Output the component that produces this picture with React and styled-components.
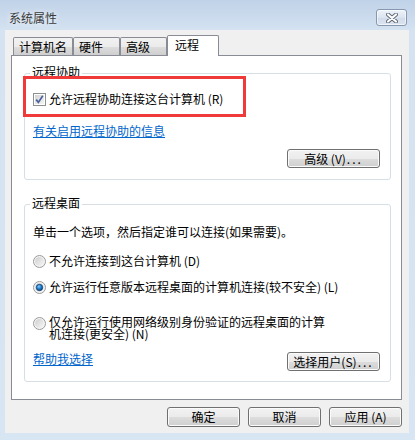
import React from 'react'
import styled, { createGlobalStyle } from 'styled-components'

const GlobalStyle = createGlobalStyle`
  body {
    margin: 0;
    font-family: "Noto Sans CJK SC", "Liberation Sans", sans-serif;
    font-size: 12px;
    color: #000;
  }
`

const Window = styled.div`
  width: 415px;
  height: 440px;
  background: linear-gradient(#c0d2e8 0px, #d4e2f1 30px, #d8e5f3 100%);
  display: flex;
  flex-direction: column;
  box-sizing: border-box;
`

const TitleBar = styled.div`
  height: 30px;
  display: flex;
  justify-content: space-between;
  align-items: flex-start;
  padding: 0 8px 0 9px;
`

const Title = styled.div`
  margin-top: 11px;
  line-height: 14px;
  font-size: 12px;
  color: #3a3a3a;
  text-shadow: 0 0 6px rgba(255, 255, 255, 0.9);
`

const CloseButton = styled.div`
  margin-top: 9px;
  width: 31px;
  height: 17px;
  box-sizing: border-box;
  border: 1px solid #8797ae;
  border-radius: 3px;
  background: linear-gradient(#eef3fa, #dbe4f0 50%, #d0dbea 51%, #dbe5f1);
  box-shadow: inset 0 0 0 1px rgba(255, 255, 255, 0.6);
  display: flex;
  align-items: center;
  justify-content: center;
`

const Client = styled.div`
  margin-left: 5px;
  width: 404px;
  height: 403px;
  background: #f0f0f0;
  box-sizing: border-box;
  padding: 5px 0 0 6px;
  display: flex;
  flex-direction: column;
`

const TabStrip = styled.div`
  display: flex;
  align-items: flex-end;
  height: 21px;
  padding-left: 2px;
  margin-bottom: -1px;
  position: relative;
  z-index: 1;
`

const Tab = styled.div`
  width: ${p => p.$w}px;
  height: ${p => (p.$active ? 21 : 18)}px;
  margin-bottom: ${p => (p.$active ? 0 : 1)}px;
  box-sizing: border-box;
  border: 1px solid #898c95;
  border-bottom: none;
  border-radius: 2px 2px 0 0;
  background: ${p => (p.$active
    ? '#fff'
    : 'linear-gradient(#f2f2f2, #ebebeb 50%, #dddddd 51%, #cfcfcf)')};
  padding: ${p => (p.$active ? '0 0 2px 7px' : '0 0 0 5px')};
  display: flex;
  align-items: center;
  line-height: 14px;
  font-size: 12px;
`

const Panel = styled.div`
  width: 391px;
  height: 345px;
  box-sizing: border-box;
  border: 1px solid #898c95;
  background: #fff;
  padding: 17px 10px 0 12px;
  display: flex;
  flex-direction: column;
`

const GroupBox = styled.div`
  border: 1px solid #d5dfe5;
  border-radius: 3px;
  padding: 0 10px ${p => p.$pb}px 8px;
  margin-top: ${p => p.$mt || 0}px;
  display: flex;
  flex-direction: column;
`

const Legend = styled.div`
  align-self: flex-start;
  margin: -9px 0 0 -3px;
  padding: 0 2px;
  background: #fff;
  line-height: 14px;
`

const Highlight = styled.div`
  align-self: flex-start;
  margin: -3px 0 0 -10px;
  width: 223px;
  height: 41px;
  box-sizing: border-box;
  border: 3px solid #f03a3a;
  padding: 13px 0 0 7px;
`

const OptionRow = styled.div`
  display: flex;
  align-items: ${p => (p.$top ? 'flex-start' : 'center')};
  gap: 3px;
  margin-top: ${p => p.$mt || 0}px;
  line-height: ${p => (p.$top ? 12 : 14)}px;

  svg {
    flex: none;
    margin-top: ${p => (p.$top ? 1 : 0)}px;
  }
`

const WrapLabel = styled.span`
  width: 280px;
`

const Link = styled.a`
  align-self: flex-start;
  margin-top: ${p => p.$mt || 0}px;
  line-height: 14px;
  color: #0066cc;
  text-decoration: underline;
  cursor: pointer;
`

const Text = styled.div`
  margin-top: ${p => p.$mt || 0}px;
  line-height: 14px;
`

const ActionRow = styled.div`
  display: flex;
  align-items: center;
  justify-content: ${p => p.$split ? 'space-between' : 'flex-end'};
  margin-top: ${p => p.$mt}px;
`

const Button = styled.div`
  width: ${p => p.$w}px;
  height: ${p => p.$h}px;
  box-sizing: border-box;
  border: 1px solid #707070;
  border-radius: 3px;
  background: linear-gradient(#f2f2f2, #ebebeb 50%, #dddddd 51%, #cfcfcf);
  box-shadow: inset 0 0 0 1px #fbfbfb;
  display: flex;
  align-items: center;
  justify-content: center;
  line-height: 14px;
  font-size: 12px;
`

const Dots = styled.span`
  letter-spacing: 2px;
  margin-left: 1px;
`

const BottomBar = styled.div`
  display: flex;
  justify-content: flex-end;
  gap: 8px;
  margin-top: 7px;
  padding-right: 7px;
`

const CloseIcon = () => (
  <svg width="12" height="10" viewBox="0 0 12 10">
    <path d="M2 1.5 L10 8.5 M10 1.5 L2 8.5" stroke="#5c6676" strokeWidth="4" strokeLinecap="round" />
    <path d="M2 1.5 L10 8.5 M10 1.5 L2 8.5" stroke="#fff" strokeWidth="2.2" strokeLinecap="round" />
  </svg>
)

const CheckBox = () => (
  <svg width="13" height="13" viewBox="0 0 13 13">
    <defs>
      <linearGradient id="cb-fill" x1="0" y1="0" x2="1" y2="1">
        <stop offset="0" stopColor="#d4d4d4" />
        <stop offset="1" stopColor="#f4f4f4" />
      </linearGradient>
    </defs>
    <rect x="0.5" y="0.5" width="12" height="12" fill="#fff" stroke="#8e8f8f" />
    <rect x="2" y="2" width="9" height="9" fill="url(#cb-fill)" />
    <path d="M3.2 6.6 L5.4 9.4 L9.8 2.8" fill="none" stroke="#4c5f9e" strokeWidth="1.7" />
  </svg>
)

const Radio = ({ checked }) => (
  <svg width="13" height="13" viewBox="0 0 13 13">
    <defs>
      <linearGradient id="rd-fill" x1="0" y1="0" x2="1" y2="1">
        <stop offset="0" stopColor="#cfcfcf" />
        <stop offset="1" stopColor="#f7f7f7" />
      </linearGradient>
      <radialGradient id="rd-dot" cx="0.4" cy="0.35" r="0.7">
        <stop offset="0" stopColor="#7fd0ff" />
        <stop offset="0.5" stopColor="#1e7fd0" />
        <stop offset="1" stopColor="#0b3f7a" />
      </radialGradient>
    </defs>
    <circle cx="6.5" cy="6.5" r="6" fill="#f4f4f4" stroke="#9a9a9a" />
    <circle cx="6.5" cy="6.5" r="4.5" fill="url(#rd-fill)" />
    {checked && <circle cx="6.5" cy="6.5" r="3.2" fill="url(#rd-dot)" stroke="#193f6e" strokeWidth="0.8" />}
  </svg>
)

const tabs = [
  { label: '计算机名', w: 60 },
  { label: '硬件', w: 47 },
  { label: '高级', w: 47 },
  { label: '远程', w: 52, active: true },
]

export default function App() {
  return (
    <>
      <GlobalStyle />
      <Window>
        <TitleBar>
          <Title>系统属性</Title>
          <CloseButton><CloseIcon /></CloseButton>
        </TitleBar>
        <Client>
          <TabStrip>
            {tabs.map(t => (
              <Tab key={t.label} $w={t.w} $active={t.active}>{t.label}</Tab>
            ))}
          </TabStrip>
          <Panel>
            <GroupBox $pb={11}>
              <Legend>远程协助</Legend>
              <Highlight>
                <OptionRow>
                  <CheckBox />
                  <span>允许远程协助连接这台计算机 (R)</span>
                </OptionRow>
              </Highlight>
              <Link $mt={7}>有关启用远程协助的信息</Link>
              <ActionRow $mt={11}>
                <Button $w={93} $h={19}>高级 (V)<Dots>...</Dots></Button>
              </ActionRow>
            </GroupBox>

            <GroupBox $mt={24} $pb={10}>
              <Legend>远程桌面</Legend>
              <Text $mt={15}>单击一个选项，然后指定谁可以连接(如果需要)。</Text>
              <OptionRow $mt={15}>
                <Radio />
                <span>不允许连接到这台计算机 (D)</span>
              </OptionRow>
              <OptionRow $mt={12}>
                <Radio checked />
                <span>允许运行任意版本远程桌面的计算机连接(较不安全) (L)</span>
              </OptionRow>
              <OptionRow $mt={22} $top>
                <Radio />
                <WrapLabel>仅允许运行使用网络级别身份验证的远程桌面的计算机连接(更安全) (N)</WrapLabel>
              </OptionRow>
              <ActionRow $mt={12} $split>
                <Link>帮助我选择</Link>
                <Button $w={93} $h={19}>选择用户(S)<Dots>...</Dots></Button>
              </ActionRow>
            </GroupBox>
          </Panel>
          <BottomBar>
            <Button $w={73} $h={20}>确定</Button>
            <Button $w={73} $h={20}>取消</Button>
            <Button $w={73} $h={20}>应用 (A)</Button>
          </BottomBar>
        </Client>
      </Window>
    </>
  )
}
